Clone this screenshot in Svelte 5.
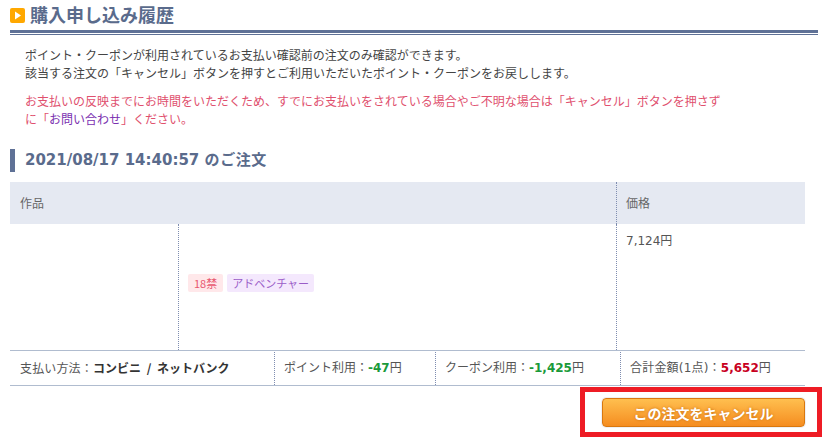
<script>
  const payments = [
    { label: 'ポイント利用：', value: '-47', cls: 'green', unit: '円' },
    { label: 'クーポン利用：', value: '-1,425', cls: 'green', unit: '円' },
    { label: '合計金額(1点)：', value: '5,652', cls: 'red', unit: '円' }
  ];
</script>

<div class="page">
  <h2 class="title">
    <span class="title-icon">
      <svg width="15" height="15" viewBox="0 0 15 15">
        <rect width="15" height="15" rx="2" fill="#ffa800" />
        <path d="M5 3.5 L11 7.5 L5 11.5 Z" fill="#fff" />
      </svg>
    </span>
    <span class="title-text">購入申し込み履歴</span>
  </h2>

  <div class="notes">
    <p>ポイント・クーポンが利用されているお支払い確認前の注文のみ確認ができます。<br />該当する注文の「キャンセル」ボタンを押すとご利用いただいたポイント・クーポンをお戻しします。</p>
    <p class="warn">お支払いの反映までにお時間をいただくため、すでにお支払いをされている場合やご不明な場合は「キャンセル」ボタンを押さず<br />に「<span class="link">お問い合わせ</span>」ください。</p>
  </div>

  <h3 class="order-date">2021/08/17 14:40:57 <span class="suffix">のご注文</span></h3>

  <div class="table">
    <div class="head">
      <div class="head-work">作品</div>
      <div class="head-price">価格</div>
    </div>
    <div class="body">
      <div class="thumb"></div>
      <div class="info">
        <span class="tag adult">18禁</span>
        <span class="tag genre">アドベンチャー</span>
      </div>
      <div class="price">7,124円</div>
    </div>
    <div class="summary">
      <div class="cell method"><span class="label">支払い方法：</span><b>コンビニ / ネットバンク</b></div>
      {#each payments as p, i}
        <div class="cell c{i}"><span class="label">{p.label}</span><b class={p.cls}>{p.value}</b>{p.unit}</div>
      {/each}
    </div>
  </div>

  <div class="actions">
    <button type="button" class="cancel">この注文をキャンセル</button>
  </div>
  <div class="highlight"></div>
</div>

<style>
  :global(body) {
    background: #fff;
  }

  .page {
    position: relative;
    width: 833px;
    height: 444px;
    overflow: hidden;
    padding: 0 15px 0 10px;
    box-sizing: border-box;
    font-family: "DejaVu Sans", "Noto Sans CJK JP", sans-serif;
    font-size: 12px;
    color: #444;
  }

  .title {
    margin: 0;
    height: 30px;
    display: flex;
    align-items: center;
    gap: 5px;
    font-family: "Noto Sans CJK JP", sans-serif;
    font-size: 18px;
    line-height: 30px;
    font-weight: 700;
    color: #5a6b8c;
    border-bottom: 3px solid #5f7196;
    box-shadow: 0 1px 0 #fff, 0 2px 0 #5f7196;
    box-sizing: content-box;
  }

  .title-icon {
    display: flex;
  }

  .title-text {
    margin-bottom: 3px;
  }

  .notes {
    padding: 13px 15px 0 15px;
    font-family: "Noto Sans CJK JP", sans-serif;
    line-height: 18px;
  }

  .notes p {
    margin: 0 0 10px;
  }

  .warn {
    color: #e0506e;
  }

  .link {
    color: #7a30b0;
  }

  .order-date {
    margin: 21px 0 10px;
    height: 23px;
    line-height: 23px;
    padding-left: 10px;
    border-left: 5px solid #5f7196;
    font-size: 15px;
    font-weight: 700;
    color: #5a6b8c;
    font-family: "DejaVu Sans", "Noto Sans CJK JP", sans-serif;
  }

  .suffix {
    letter-spacing: 0.6px;
  }

  .table {
    width: 795px;
  }

  .head {
    display: flex;
    height: 42px;
    background: #e5e9f2;
    line-height: 42px;
    color: #666;
    font-family: "Noto Sans CJK JP", sans-serif;
  }

  .head-work {
    width: 606px;
    padding-left: 10px;
    box-sizing: border-box;
  }

  .head-price {
    flex: 1;
    padding-left: 9px;
    border-left: 1px dotted #7f8db0;
  }

  .body {
    display: flex;
    height: 126px;
  }

  .thumb {
    width: 168px;
  }

  .info {
    width: 438px;
    box-sizing: border-box;
    border-left: 1px dotted #7f8db0;
    padding-left: 9px;
    padding-bottom: 8px;
    display: flex;
    align-items: center;
    gap: 4px;
  }

  .tag {
    height: 18px;
    line-height: 18px;
    padding: 0 5px;
    border-radius: 2px;
    font-size: 11px;
    font-family: "Noto Sans CJK JP", sans-serif;
  }

  .adult {
    background: #ffe8ea;
    color: #e8566e;
    padding: 0 6px;
  }

  .genre {
    background: #f4e8fd;
    color: #9a5cc8;
  }

  .price {
    flex: 1;
    border-left: 1px dotted #7f8db0;
    padding: 8px 0 0 9px;
    line-height: 18px;
    color: #555;
  }

  .summary {
    display: flex;
    height: 34px;
    border-top: 1px solid #b0bccf;
    border-bottom: 1px solid #b0bccf;
    font-family: "DejaVu Sans", "Noto Sans CJK JP", sans-serif;
    color: #555;
  }

  .cell {
    box-sizing: border-box;
    padding-left: 9px;
    border-left: 1px dotted #7f8db0;
    margin-top: 1px;
    line-height: 32px;
    white-space: nowrap;
  }

  .method {
    width: 264px;
    border-left: 0;
    padding-left: 10px;
  }

  .method .label {
    letter-spacing: 0.15px;
  }

  .method b {
    font-family: "Noto Sans CJK JP", sans-serif;
    word-spacing: 3px;
  }

  .c0 {
    width: 161px;
  }

  .c1 {
    width: 185px;
  }

  .c2 {
    flex: 1;
  }

  .c2 .label {
    letter-spacing: 0.2px;
  }

  .cell b {
    color: #333;
  }

  .cell b.green {
    color: #1a9a3a;
  }

  .cell b.red {
    color: #c8001e;
  }

  .actions {
    width: 795px;
    display: flex;
    justify-content: flex-end;
    padding-top: 12px;
  }

  .cancel {
    width: 203px;
    height: 29px;
    border: 1px solid #d9780f;
    border-radius: 4px;
    background: linear-gradient(#ffbf4f, #f58d20);
    box-shadow: 0 0 0 1px #eef0f4;
    color: #fff;
    font-family: "Noto Sans CJK JP", sans-serif;
    font-weight: 700;
    font-size: 14px;
    text-shadow: 0 0 3px #c9700e;
    padding: 0;
  }

  .highlight {
    position: absolute;
    left: 580px;
    top: 387px;
    width: 242px;
    height: 50px;
    box-sizing: border-box;
    border: 5px solid #ee1c25;
  }
</style>
